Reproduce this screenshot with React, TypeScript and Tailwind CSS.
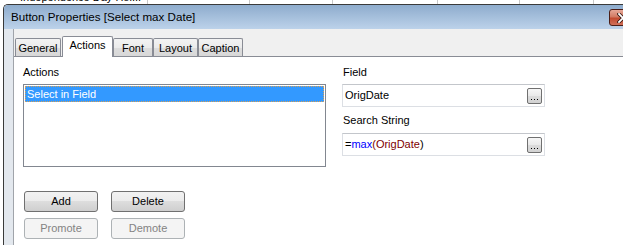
import React from 'react'

const BTN =
  'flex items-center justify-center rounded-[3px] border h-[21px] w-[74px] text-[11px] leading-[13px]'
const BTN_ON =
  'border-[#707070] text-black bg-[linear-gradient(#f2f2f2,#ebebeb_50%,#dddddd_50%,#cfcfcf)]'
const BTN_OFF = 'border-[#adb2b5] text-[#838383] bg-[#f4f4f4]'

function TopStrip() {
  const cells = [148, 102, 83, 105, 82, 74]
  return (
    <div className="flex h-[4px] shrink-0 overflow-hidden bg-white">
      {cells.map((w, i) => (
        <div key={i} className="h-full shrink-0 border-r border-[#c8c8c8]" style={{ width: w }}>
          {i === 0 && (
            <div className="mt-[-9px] pl-[20px] whitespace-nowrap text-[11px] leading-[13px] text-black">
              Independence Day Hol...
            </div>
          )}
        </div>
      ))}
      <div className="flex-1" />
    </div>
  )
}

function CloseButton() {
  return (
    <div className="absolute left-[605px] top-[4px] flex h-[17px] w-[27px] items-center justify-center rounded-[3px] border border-[#4b1e17] bg-[linear-gradient(#e6a797,#d27a63_45%,#c24a30_55%,#d0705a)]">
      <svg width="12" height="10" viewBox="0 0 12 10">
        <path d="M2 1 L10 9 M10 1 L2 9" stroke="#3b1a14" strokeWidth="3.4" strokeLinecap="square" />
        <path d="M2 1 L10 9 M10 1 L2 9" stroke="#ffffff" strokeWidth="1.8" strokeLinecap="square" />
      </svg>
    </div>
  )
}

function Tab({ label, w, active }: { label: string; w: number; active?: boolean }) {
  if (active) {
    return (
      <div
        className="relative z-10 -mb-px ml-px flex h-[21px] shrink-0 justify-center rounded-t-[2px] border border-b-0 border-[#898c95] bg-white pt-[2px]"
        style={{ width: w }}
      >
        {label}
      </div>
    )
  }
  return (
    <div
      className="flex h-[18px] shrink-0 justify-center rounded-t-[2px] border border-b-0 border-[#898c95] bg-[linear-gradient(#f3f3f3,#ebebeb_50%,#dddddd_50%,#d8d8d8)] pt-[3px]"
      style={{ width: w }}
    >
      {label}
    </div>
  )
}

function Browse() {
  return (
    <div className="flex h-[16px] w-[15px] items-end justify-center gap-[2px] rounded-[2px] border border-[#707070] bg-[linear-gradient(#f6f6f6,#e9e9e9_50%,#dcdcdc_50%,#d2d2d2)] pb-[3px]">
      <span className="h-px w-px bg-black" />
      <span className="h-px w-px bg-black" />
      <span className="h-px w-px bg-black" />
    </div>
  )
}

function TextBox({ children }: { children: React.ReactNode }) {
  return (
    <div className="flex h-[23px] items-center justify-between border border-[#dcdfe4] border-t-[#c3c6cb] bg-white pl-[2px] pr-[2px]">
      <span className="whitespace-nowrap text-[11px]">{children}</span>
      <Browse />
    </div>
  )
}

export default function App() {
  return (
    <div className="flex h-[245px] w-[623px] flex-col overflow-hidden bg-white font-['Liberation_Sans',Arial,sans-serif] text-[11px] leading-[13px] text-black">
      <TopStrip />
      <div className="flex min-h-0 flex-1 pl-[3px]">
        <div className="flex w-[700px] shrink-0 flex-col overflow-hidden rounded-tl-[5px] border-l border-t border-[#3a3a3a]">
          {/* title bar */}
          <div className="relative flex h-[24px] shrink-0 items-center bg-[linear-gradient(#8eaccd,#bcd2ea)] pl-[7px]">
            <span className="text-[11.6px] leading-[14px] text-black">Button Properties [Select max Date]</span>
            <CloseButton />
          </div>
          <div className="flex flex-1">
            <div className="w-[9px] shrink-0 bg-[#e3e8ee]" />
            <div className="flex flex-1 flex-col border-l border-[#a0a4aa] bg-[#f0f0f0] pt-[5px]">
              {/* tabs */}
              <div className="flex h-[22px] shrink-0 items-end pl-px">
                <Tab label="General" w={46} />
                <Tab label="Actions" w={51} active />
                <Tab label="Font" w={40} />
                <Tab label="Layout" w={45} />
                <Tab label="Caption" w={45} />
              </div>
              {/* page */}
              <div className="flex flex-1 gap-[16px] border-t border-[#898c95] bg-white pl-[9px] pt-[9px]">
                <div className="flex w-[303px] flex-col">
                  <div>Actions</div>
                  <div className="mt-[5px] h-[83px] border border-[#828790] bg-white p-px">
                    <div className="flex h-[16px] items-center border border-dotted border-[#d8a055] bg-[#3399ff] pl-px text-white">
                      Select in Field
                    </div>
                  </div>
                  <div className="mt-[24px] flex flex-col gap-[6px] pl-px">
                    <div className="flex gap-[13px]">
                      <div className={`${BTN} ${BTN_ON}`}>Add</div>
                      <div className={`${BTN} ${BTN_ON}`}>Delete</div>
                    </div>
                    <div className="flex gap-[13px]">
                      <div className={`${BTN} ${BTN_OFF}`}>Promote</div>
                      <div className={`${BTN} ${BTN_OFF}`}>Demote</div>
                    </div>
                  </div>
                </div>
                <div className="flex w-[203px] flex-col">
                  <div className="pl-px">Field</div>
                  <div className="mt-[5px]">
                    <TextBox>OrigDate</TextBox>
                  </div>
                  <div className="mt-[7px] pl-px">Search String</div>
                  <div className="mt-[6px]">
                    <TextBox>
                      =<span className="text-[#0000ff]">max</span>
                      <span className="text-[#800000]">(OrigDate</span>)
                    </TextBox>
                  </div>
                </div>
              </div>
            </div>
          </div>
        </div>
      </div>
    </div>
  )
}
